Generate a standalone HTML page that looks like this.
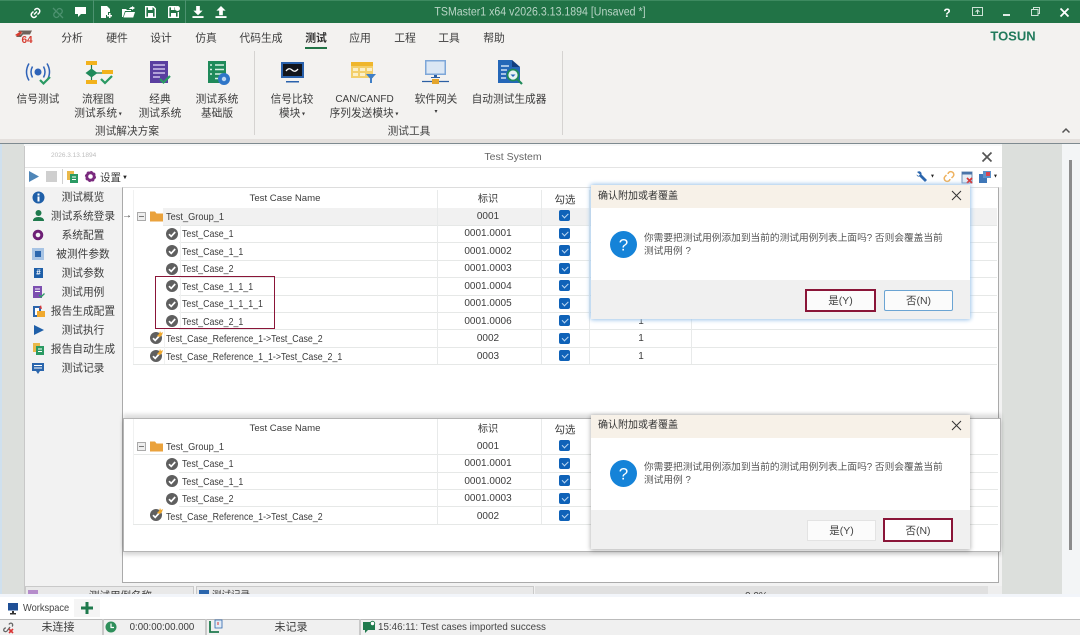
<!DOCTYPE html>
<html><head><meta charset="utf-8"><style>
html,body{margin:0;padding:0;background:#fff}
body{width:1080px;height:635px;position:relative;overflow:hidden;font-family:"Liberation Sans","Noto Sans CJK SC",sans-serif;font-size:10px;color:#3c3c3c}
.a{position:absolute}
.c{position:absolute;transform:translate(-50%,-50%);white-space:nowrap;line-height:1}
.l{position:absolute;transform:translateY(-50%);white-space:nowrap;line-height:1}
.n{font-size:10.500px;transform:translateY(-50%) scaleX(.84);transform-origin:left center}
svg{position:absolute;overflow:visible}
.cb{position:absolute;width:11px;height:11px;border-radius:2px;background:#0f62b8}
.cb:after{content:"";position:absolute;left:3px;top:2.500px;width:5px;height:2.500px;border-left:1px solid #b9d6f2;border-bottom:1px solid #b9d6f2;transform:rotate(-45deg)}
.hl{position:absolute;height:1px;background:#e6e8e7}
.vl{position:absolute;width:1px;background:#e8eaea}
.dlg{position:absolute;background:#fff}
.btn{position:absolute;background:#fbfbfb;text-align:center;box-sizing:border-box;font-size:10.500px;color:#444}
.t{font-size:10.700px}
.s{font-size:10.800px}
</style></head><body>
<svg width="0" height="0" style="position:absolute"><defs>
<g id="ck"><circle cx="6" cy="6" r="6" fill="#5f5f5f"/><path d="M3 6.200l2.200 2.200L9.200 4" fill="none" stroke="#fff" stroke-width="1.700"/></g>
<g id="rf"><circle cx="6" cy="7" r="6" fill="#5f5f5f"/><path d="M3 7.200l2.200 2.200L9.200 5" fill="none" stroke="#fff" stroke-width="1.700"/><path d="M7 5L9 3l1-3 1 2 2-1-1 3-2 2z" fill="#f0a92e"/></g>
<g id="fo"><path d="M0 1.500h5l1.500 2H13v8H0z" fill="#eaa23c"/></g>
</defs></svg>

<!-- title bar -->
<div class="a" style="left:0;top:0;width:1080px;height:23px;background:#217346"></div>
<div class="a" style="left:0;top:0;width:1080px;height:1px;background:#3d8a60"></div>
<div class="a" style="left:93px;top:0;width:1px;height:23px;background:#4d9270"></div>
<div class="a" style="left:185px;top:0;width:1px;height:23px;background:#4d9270"></div>
<svg style="left:29px;top:7px" width="13" height="12" viewBox="0 0 12 12" fill="none" stroke="#fff" stroke-width="1.500"><path d="M5 3.500a2.600 2.600 0 0 1 4-1.500 2.600 2.600 0 0 1 .6 4L8 7.500M7 8.500A2.600 2.600 0 0 1 3 10 2.600 2.600 0 0 1 2.400 6L4 4.500M4.500 7.500L7.500 4.500"/></svg>
<svg style="left:52px;top:7px" width="12" height="12" viewBox="0 0 12 12" fill="none" stroke="#4d9270" stroke-width="1.300"><path d="M5 3.500a2.600 2.600 0 0 1 4-1.500 2.600 2.600 0 0 1 .6 4L8 7.500M7 8.500A2.600 2.600 0 0 1 3 10 2.600 2.600 0 0 1 2.400 6L4 4.500M1 1l10 10"/></svg>
<svg style="left:75px;top:7px" width="11" height="10" viewBox="0 0 11 10"><path d="M0 0h11v7H6L3 10V7H0z" fill="#fff"/></svg>
<svg style="left:101px;top:6px" width="11" height="12" viewBox="0 0 11 12"><path d="M0 0h6l3 3v3H7v3H5v3H0z" fill="#fff"/><path d="M6 9h2V7h1.500v2H11v1.500H9.500V12H8v-1.500H6z" fill="#fff"/></svg>
<svg style="left:122px;top:6px" width="13" height="12" viewBox="0 0 13 12"><path d="M0 3h4l1 1h4v1H3L1 11H0z" fill="#fff"/><path d="M3.500 6H13l-1.800 5.500H1.500z" fill="#fff"/><path d="M7 3q1-2 3-2V0l3 2-3 2V3q-2 0-3 0z" fill="#fff"/></svg>
<svg style="left:145px;top:6px" width="11" height="12" viewBox="0 0 11 12"><path d="M0.700 0.700h7.600l2 2v8.600H0.700z" fill="none" stroke="#fff" stroke-width="1.400"/><path d="M3 1h4.500v3H3zM3 7h5v4H3z" fill="#fff"/></svg>
<svg style="left:168px;top:6px" width="12" height="12" viewBox="0 0 12 12"><path d="M0.700 0.700h7v3M.7.7v10.600h9.600V6" fill="none" stroke="#fff" stroke-width="1.400"/><path d="M3 1h3.500v3H3zM3 7h5v4H3z" fill="#fff"/><circle cx="9.500" cy="2.500" r="2.500" fill="#fff"/></svg>
<svg style="left:192px;top:6px" width="12" height="12" viewBox="0 0 12 13"><path d="M4 0h4v5h3L6 10 1 5h3zM0 11h12v2H0z" fill="#fff"/></svg>
<svg style="left:215px;top:6px" width="12" height="12" viewBox="0 0 12 13"><path d="M6 0l5 5H8v5H4V5H1zM0 11h12v2H0z" fill="#fff"/></svg>
<div class="c" style="left:540px;top:13px;font-size:11.500px;color:#b9d5c6;transform:translate(-50%,-50%) scaleX(.92)">TSMaster1 x64 v2026.3.13.1894 [Unsaved *]</div>
<div class="c" style="left:947px;top:12.500px;font-size:12px;font-weight:bold;color:#fff">?</div>
<svg style="left:972px;top:7px" width="11" height="10" viewBox="0 0 11 10" fill="none" stroke="#cfe2d7"><path d="M.5.500h10v8H.5zM5.500 7V3M3.500 5l2-2 2 2"/></svg>
<div class="a" style="left:1003px;top:14px;width:7px;height:2px;background:#dfeae4"></div>
<svg style="left:1031px;top:7px" width="9" height="9" viewBox="0 0 9 9" fill="none" stroke="#cfe2d7"><path d="M.5 2.500h6.500v6H.5zM2.500 2.500V.5h6v6H7"/></svg>
<svg style="left:1060px;top:7.500px" width="9" height="9" viewBox="0 0 9 9" fill="none" stroke="#fff" stroke-width="1.800"><path d="M.5.500l8 8M8.500.5l-8 8"/></svg>

<!-- ribbon -->
<div class="a" style="left:0;top:23px;width:1080px;height:117px;background:#f3f2f0"></div>
<div class="a" style="left:0;top:139px;width:1080px;height:4px;background:#e4e0dd"></div>
<svg style="left:14px;top:29px" width="20" height="17" viewBox="0 0 20 17"><path d="M5 1.500h13l-2 4H9L7 8H2l2-2.500h3L8.500 3H4z" fill="#6f625a"/><path d="M1 6l6-4 1 2-4 3.500z" fill="#d63b2f"/></svg>
<div class="a" style="left:21.500px;top:35.500px;font-size:10px;font-weight:bold;color:#d63b2f;line-height:10px">64</div>
<div class="c s" style="left:72px;top:39px">分析</div>
<div class="c s" style="left:117px;top:39px">硬件</div>
<div class="c s" style="left:161px;top:39px">设计</div>
<div class="c s" style="left:206px;top:39px">仿真</div>
<div class="c s" style="left:261px;top:39px">代码生成</div>
<div class="c s" style="left:316px;top:39px;font-weight:bold;color:#333">测试</div>
<div class="a" style="left:305px;top:47px;width:22px;height:2px;background:#217346"></div>
<div class="c s" style="left:360px;top:39px">应用</div>
<div class="c s" style="left:405px;top:39px">工程</div>
<div class="c s" style="left:449px;top:39px">工具</div>
<div class="c s" style="left:494px;top:39px">帮助</div>
<div class="c" style="left:1013px;top:36px;font-size:13px;font-weight:bold;color:#217a5c">TOSUN</div>
<div class="a" style="left:254px;top:51px;width:1px;height:84px;background:#d5d3d1"></div>
<div class="a" style="left:562px;top:51px;width:1px;height:84px;background:#d5d3d1"></div>

<!-- ribbon icons -->
<svg style="left:25px;top:62px" width="26" height="24" viewBox="0 0 26 24" fill="none"><circle cx="13" cy="10" r="3.500" fill="#2e63b8"/><path d="M7.500 4.500q-3 5.500 0 11M18.500 4.500q3 5.500 0 11" stroke="#2e63b8" stroke-width="1.500"/><path d="M4 1.500q-5 8.500 0 17M22 1.500q5 8.500 0 17" stroke="#2e63b8" stroke-width="1.500"/><path d="M15 18l3.500 3.500L25 15" stroke="#2a9a63" stroke-width="2.200"/></svg>
<svg style="left:85px;top:60px" width="28" height="26" viewBox="0 0 28 26"><path d="M6.500 4v18M6.500 13H20" stroke="#1f7a4d" stroke-width="1.200"/><path d="M1 1h11v4H1zM1 20h11v4H1zM17 10h11v4H17z" fill="#f2b21c"/><path d="M6.500 8.500l6 4.500-6 4.500-6-4.500z" fill="#1f8a5a"/><path d="M16 19l4 4 7-7" fill="none" stroke="#2a9a63" stroke-width="2.200"/></svg>
<svg style="left:150px;top:60px" width="20" height="26" viewBox="0 0 20 26"><path d="M0 1h18v22H0z" fill="#5a3fa0"/><path d="M3 5h12M3 9h12M3 13h12M3 17h7" stroke="#cfc4ea" stroke-width="1.500"/><path d="M10 19l3.500 3.500L20 16" fill="none" stroke="#2a9a63" stroke-width="2.200"/></svg>
<svg style="left:207px;top:60px" width="24" height="26" viewBox="0 0 24 26"><path d="M1 1h18v22H1z" fill="#1f8a5a"/><path d="M8 5h9M8 9.500h9M8 14h9M8 18.500h4M3 5h2M3 9.500h2M3 14h2" stroke="#d5efe2" stroke-width="1.500"/><circle cx="17" cy="19" r="6" fill="#2f76c8"/><circle cx="17" cy="19" r="2.200" fill="#bcd7f2"/></svg>
<svg style="left:281px;top:61px" width="23" height="22" viewBox="0 0 23 22"><path d="M0 1h23v16H0z" fill="#2a62ad"/><path d="M2 3h19v12H2z" fill="#12151c"/><path d="M5 10q3-4 6-1t6-1" fill="none" stroke="#fff" stroke-width="1.300"/><path d="M5 20h13v1.500H5z" fill="#2a62ad"/></svg>
<svg style="left:350px;top:61px" width="26" height="22" viewBox="0 0 26 22"><path d="M1 1h22v16H1z" fill="#f3cf6b"/><path d="M1 1h22v4H1z" fill="#efb62c"/><path d="M3 7h5v3H3zM10 7h5v3h-5zM17 7h5v3h-5zM3 12h5v3H3zM10 12h5v3h-5z" fill="#fbefc8"/><path d="M16 13h10l-4 4.500V22h-2v-4.500z" fill="#3f7fc6"/></svg>
<svg style="left:422px;top:59px" width="27" height="27" viewBox="0 0 27 27"><path d="M3 1h21v15H3z" fill="#7ea7d8"/><path d="M4.500 2.500h18v12h-18z" fill="#dbe7f4"/><path d="M12 16h3v3h-3zM9 18h9v1H9z" fill="#2c5fa3"/><path d="M0 22.500h27" stroke="#2c5fa3" stroke-width="1.200"/><path d="M10 20h7v5h-7z" fill="#e4a52c"/></svg>
<svg style="left:498px;top:60px" width="25" height="26" viewBox="0 0 25 26"><path d="M0 0h14l8 7v16H0z" fill="#2467b8"/><path d="M14 0l8 7h-8z" fill="#123f7f"/><path d="M3 6h8M3 10h6M3 14h5M3 18h5" stroke="#cfe0f4" stroke-width="1.400"/><circle cx="15" cy="15" r="5.500" fill="#e8f3f2" stroke="#1f8a5a" stroke-width="1.800"/><path d="M12.500 14.500h5l-2.500 2.500z" fill="#2467b8"/><path d="M19 19l5 5" stroke="#1f8a5a" stroke-width="2.200"/></svg>

<div class="c t" style="left:38px;top:100px">信号测试</div>
<div class="c t" style="left:98px;top:100px">流程图</div>
<div class="c t" style="left:98px;top:114px">测试系统<span style="font-size:6px;vertical-align:1px"> ▾</span></div>
<div class="c t" style="left:160px;top:100px">经典</div>
<div class="c t" style="left:160px;top:114px">测试系统</div>
<div class="c t" style="left:217px;top:100px">测试系统</div>
<div class="c t" style="left:217px;top:114px">基础版</div>
<div class="c t" style="left:292px;top:100px">信号比较</div>
<div class="c t" style="left:292px;top:114px">模块<span style="font-size:6px;vertical-align:1px"> ▾</span></div>
<div class="c" style="left:364.500px;top:99.500px;font-size:10px">CAN/CANFD</div>
<div class="c t" style="left:364px;top:114px">序列发送模块<span style="font-size:6px;vertical-align:1px"> ▾</span></div>
<div class="c t" style="left:436px;top:100px">软件网关</div>
<div class="c" style="left:436px;top:112px;font-size:6px">▾</div>
<div class="c t" style="left:509px;top:100px">自动测试生成器</div>
<div class="c t" style="left:127px;top:132px">测试解决方案</div>
<div class="c t" style="left:409px;top:132px">测试工具</div>
<svg style="left:1062px;top:128px" width="8" height="5" viewBox="0 0 8 5" fill="none" stroke="#555" stroke-width="1.500"><path d="M.5 4.500L4 1l3.500 3.500"/></svg>

<!-- main background -->
<div class="a" style="left:0;top:143px;width:1080px;height:452px;background:#f6f7f7"></div>
<div class="a" style="left:0;top:143px;width:1080px;height:1px;background:#7e8a90"></div>
<div class="a" style="left:0;top:144px;width:2px;height:451px;background:#cfe0ee"></div>
<div class="a" style="left:2px;top:144px;width:22px;height:451px;background:#dcdfdc"></div>
<div class="a" style="left:1002px;top:144px;width:60px;height:451px;background:#dcdfdc"></div>
<div class="a" style="left:1062px;top:144px;width:18px;height:451px;background:#f3f5f6"></div>
<div class="a" style="left:1069px;top:160px;width:3px;height:390px;background:#8c8c8c"></div>

<!-- window -->
<div class="a" style="left:24px;top:146px;width:978px;height:449px;background:#f2f2f2;border-left:1px solid #c8c8c8;box-sizing:border-box"></div>
<div class="a" style="left:25px;top:146px;width:977px;height:21px;background:#fff;border-bottom:1px solid #e4e4e4"></div>
<div class="l" style="left:51px;top:156px;font-size:6.500px;color:#bdbdbd">2026.3.13.1894</div>
<div class="c" style="left:513px;top:157px;font-size:10.500px;color:#666">Test System</div>
<svg style="left:982px;top:152px" width="10" height="10" viewBox="0 0 10 10" fill="none" stroke="#555" stroke-width="1.700"><path d="M.5.500l9 9M9.500.5l-9 9"/></svg>
<div class="a" style="left:25px;top:168px;width:977px;height:19px;background:#fff"></div>
<svg style="left:29px;top:171px" width="10" height="11" viewBox="0 0 10 11"><path d="M0 0l10 5.500L0 11z" fill="#4f86b8"/></svg>
<div class="a" style="left:46px;top:171px;width:11px;height:11px;background:#cfcfcf"></div>
<div class="a" style="left:62px;top:169px;width:1px;height:15px;background:#d0d0d0"></div>
<svg style="left:67px;top:171px" width="11" height="12" viewBox="0 0 11 12"><path d="M0 0h7v9H0z" fill="#eab94a"/><path d="M3 3h8v9H3z" fill="#2a9a63"/><path d="M5 6h4M5 8.500h4" stroke="#fff"/></svg>
<svg style="left:85px;top:171px" width="11" height="11" viewBox="0 0 11 11"><circle cx="5.500" cy="5.500" r="3.700" fill="none" stroke="#7a2a7e" stroke-width="2.800"/><circle cx="5.500" cy="5.500" r="5" fill="none" stroke="#7a2a7e" stroke-width="1.200" stroke-dasharray="2 1.900"/></svg>
<div class="l" style="left:100px;top:178px;font-size:10.500px">设置</div>
<div class="l" style="left:122px;top:177.500px;font-size:6px;color:#222">▼</div>
<svg style="left:916px;top:171px" width="11" height="11" viewBox="0 0 11 11"><path d="M1 1q3-2 4.500 1 0 1 0 1.500L11 9l-2 2-5.500-5.500Q1 6 .5 3.500L2.500 5 4 3.500z" fill="#2b66ad"/></svg>
<div class="l" style="left:930px;top:177px;font-size:5px;color:#222">▼</div>
<svg style="left:943px;top:170px" width="12" height="13" viewBox="0 0 12 13" fill="none" stroke="#eeb25f" stroke-width="1.500"><path d="M5 4a2.800 2.800 0 0 1 4.500-1.800 2.800 2.800 0 0 1 .6 4.300L8.500 8M7 9a2.800 2.800 0 0 1-4.500 1.800A2.800 2.800 0 0 1 2 6.500L3.500 5"/></svg>
<svg style="left:961px;top:171px" width="13" height="13" viewBox="0 0 13 13"><path d="M1 1h10v11H1z" fill="#e6ecf4" stroke="#6f8fb6"/><path d="M1 1h10v2.500H1z" fill="#4a74a8"/><path d="M6 7l5 5M11 7l-5 5" stroke="#d93636" stroke-width="1.700"/></svg>
<svg style="left:979px;top:171px" width="12" height="12" viewBox="0 0 12 12"><path d="M0 3h8v9H0z" fill="#3f77b8"/><path d="M4 0h8v7H4z" fill="#5d92cb"/><path d="M7 1h4v4H7z" fill="#d9434f"/></svg>
<div class="l" style="left:993px;top:177px;font-size:5px;color:#222">▼</div>

<!-- sidebar -->
<div class="a" style="left:25px;top:187px;width:97px;height:408px;background:#f2f2f2"></div>
<div class="c t" style="left:83px;top:198px">测试概览</div>
<div class="c t" style="left:83px;top:217px">测试系统登录</div>
<div class="c t" style="left:83px;top:236px">系统配置</div>
<div class="c t" style="left:83px;top:255px">被测件参数</div>
<div class="c t" style="left:83px;top:274px">测试参数</div>
<div class="c t" style="left:83px;top:293px">测试用例</div>
<div class="c t" style="left:83px;top:312px">报告生成配置</div>
<div class="c t" style="left:83px;top:331px">测试执行</div>
<div class="c t" style="left:83px;top:350px">报告自动生成</div>
<div class="c t" style="left:83px;top:369px">测试记录</div>
<svg style="left:32px;top:191px" width="13" height="13" viewBox="0 0 13 13"><circle cx="6.500" cy="6.500" r="6" fill="#1f5fa8"/><path d="M5.500 2.500h2v2h-2zM5.500 5.500h2v5h-2z" fill="#fff"/></svg>
<svg style="left:33px;top:210px" width="11" height="12" viewBox="0 0 11 12"><circle cx="5.500" cy="3" r="3" fill="#1f7a4d"/><path d="M0 11q0-4 5.500-4T11 11z" fill="#1f7a4d"/></svg>
<svg style="left:32px;top:229px" width="12" height="12" viewBox="0 0 12 12"><circle cx="6" cy="6" r="3.800" fill="none" stroke="#6d1f75" stroke-width="3"/></svg>
<div class="a" style="left:32px;top:248px;width:12px;height:12px;background:#a8c4e4"></div><div class="a" style="left:35px;top:251px;width:6px;height:6px;background:#2b66ad"></div>
<div class="a" style="left:34px;top:268px;width:9px;height:10px;background:#1f5fa8;color:#fff;font-size:8px;line-height:10px;text-align:center;font-weight:bold">#</div>
<svg style="left:33px;top:286px" width="12" height="12" viewBox="0 0 12 12"><path d="M0 0h9v12H0z" fill="#7d4fb0"/><path d="M2 3h5M2 5.500h5" stroke="#fff"/><path d="M6 9l2 2 3.500-3.500" fill="none" stroke="#2a9a63" stroke-width="1.300"/></svg>
<svg style="left:33px;top:305px" width="12" height="12" viewBox="0 0 12 12"><path d="M0 1h8v11H0z" fill="#2b66ad"/><path d="M2 3h4v7H2z" fill="#fff"/><path d="M4 6h8v6H4z" fill="#f0a92e"/><path d="M6 3l2-3 1 4z" fill="#d93636"/></svg>
<svg style="left:34px;top:325px" width="10" height="10" viewBox="0 0 10 10"><path d="M0 0l10 5-10 5z" fill="#1f5fa8"/></svg>
<svg style="left:33px;top:343px" width="12" height="12" viewBox="0 0 12 12"><path d="M0 0h7v9H0z" fill="#eab94a"/><path d="M3 3h8v9H3z" fill="#2a9a63"/><path d="M5 6h4M5 8.500h4" stroke="#fff"/></svg>
<svg style="left:32px;top:363px" width="12" height="11" viewBox="0 0 12 11"><path d="M0 0h12v8H8l-2 3-2-3H0z" fill="#2b66ad"/><path d="M2 2.500h8M2 5h8" stroke="#fff"/></svg>

<!-- content -->
<div class="a" style="left:122px;top:187px;width:877px;height:396px;background:#fff;border:1px solid #aaa;border-top-color:#ddd;box-sizing:border-box"></div>

<!-- table 1 -->
<div class="a" style="left:163px;top:208px;width:834px;height:17px;background:#f1f1f1"></div>
<div class="hl" style="left:179px;top:242px;width:818px"></div>
<div class="hl" style="left:179px;top:260px;width:818px"></div>
<div class="hl" style="left:179px;top:277px;width:818px"></div>
<div class="hl" style="left:179px;top:295px;width:818px"></div>
<div class="hl" style="left:179px;top:312px;width:818px"></div>
<div class="hl" style="left:179px;top:329px;width:818px"></div>
<div class="hl" style="left:133px;top:347px;width:864px"></div>
<div class="hl" style="left:133px;top:364px;width:864px"></div>
<div class="hl" style="left:163px;top:225px;width:834px"></div>
<div class="vl" style="left:437px;top:190px;height:174px"></div>
<div class="vl" style="left:541px;top:190px;height:174px"></div>
<div class="vl" style="left:589px;top:190px;height:174px"></div>
<div class="vl" style="left:691px;top:190px;height:174px"></div>
<div class="vl" style="left:133px;top:190px;height:174px;background:#f0f1f1"></div>
<div class="vl" style="left:180px;top:225px;height:104px;background:#f0f1f1"></div>
<div class="vl" style="left:164px;top:329px;height:35px;background:#f0f1f1"></div>
<div class="c" style="left:285px;top:199px;font-size:9.600px">Test Case Name</div>
<div class="c" style="left:488px;top:199.500px;font-size:10.200px">标识</div>
<div class="c" style="left:565px;top:199.500px;font-size:10.500px">勾选</div>
<div class="c" style="left:127px;top:216px;font-size:10px">→</div>
<div class="a" style="left:137px;top:212px;width:7px;height:7px;border:1px solid #aaa;background:#eee"></div><div class="a" style="left:139px;top:216px;width:5px;height:1px;background:#777"></div>
<svg style="left:150px;top:210px;width:13px;height:12px"><use href="#fo"/></svg>
<div class="l n" style="left:166px;top:216.500px;transform:translateY(-50%) scaleX(.88)">Test_Group_1</div>
<svg style="left:166px;top:228px;width:12px;height:12px"><use href="#ck"/></svg><div class="l n" style="left:182px;top:234px">Test_Case_1</div>
<svg style="left:166px;top:245px;width:12px;height:12px"><use href="#ck"/></svg><div class="l n" style="left:182px;top:251.500px">Test_Case_1_1</div>
<svg style="left:166px;top:263px;width:12px;height:12px"><use href="#ck"/></svg><div class="l n" style="left:182px;top:269px">Test_Case_2</div>
<svg style="left:166px;top:280px;width:12px;height:12px"><use href="#ck"/></svg><div class="l n" style="left:182px;top:286.500px">Test_Case_1_1_1</div>
<svg style="left:166px;top:298px;width:12px;height:12px"><use href="#ck"/></svg><div class="l n" style="left:182px;top:304px">Test_Case_1_1_1_1</div>
<svg style="left:166px;top:315px;width:12px;height:12px"><use href="#ck"/></svg><div class="l n" style="left:182px;top:321.500px">Test_Case_2_1</div>
<svg style="left:150px;top:331px;width:14px;height:14px"><use href="#rf"/></svg><div class="l n" style="left:166px;top:339px">Test_Case_Reference_1-&gt;Test_Case_2</div>
<svg style="left:150px;top:349px;width:14px;height:14px"><use href="#rf"/></svg><div class="l n" style="left:166px;top:356.500px">Test_Case_Reference_1_1-&gt;Test_Case_2_1</div>
<div class="c" style="left:488px;top:216.500px">0001</div>
<div class="c" style="left:488px;top:234px">0001.0001</div>
<div class="c" style="left:488px;top:251.500px">0001.0002</div>
<div class="c" style="left:488px;top:269px">0001.0003</div>
<div class="c" style="left:488px;top:286.500px">0001.0004</div>
<div class="c" style="left:488px;top:304px">0001.0005</div>
<div class="c" style="left:488px;top:321.500px">0001.0006</div>
<div class="c" style="left:488px;top:339px">0002</div>
<div class="c" style="left:488px;top:356.500px">0003</div>
<div class="cb" style="left:559px;top:210px"></div>
<div class="cb" style="left:559px;top:228px"></div>
<div class="cb" style="left:559px;top:245px"></div>
<div class="cb" style="left:559px;top:263px"></div>
<div class="cb" style="left:559px;top:280px"></div>
<div class="cb" style="left:559px;top:298px"></div>
<div class="cb" style="left:559px;top:315px"></div>
<div class="cb" style="left:559px;top:333px"></div>
<div class="cb" style="left:559px;top:350px"></div>
<div class="c" style="left:641px;top:321.500px">1</div>
<div class="c" style="left:641px;top:339px">1</div>
<div class="c" style="left:641px;top:356.500px">1</div>
<div class="a" style="left:155px;top:276px;width:120px;height:53px;border:1.500px solid #8a1538;box-sizing:border-box"></div>

<!-- overlay panel -->
<div class="a" style="left:123px;top:418px;width:878px;height:134px;background:#fff;border:1px solid #b5b5b5;box-sizing:border-box;box-shadow:0 -4px 4px rgba(0,0,0,.13),0 3px 4px rgba(0,0,0,.16)"></div>
<div class="hl" style="left:133px;top:454px;width:865px"></div>
<div class="hl" style="left:179px;top:472px;width:819px"></div>
<div class="hl" style="left:179px;top:489px;width:819px"></div>
<div class="hl" style="left:179px;top:506px;width:819px"></div>
<div class="hl" style="left:133px;top:524px;width:865px"></div>
<div class="vl" style="left:437px;top:419px;height:105px"></div>
<div class="vl" style="left:541px;top:419px;height:105px"></div>
<div class="vl" style="left:133px;top:419px;height:105px;background:#f0f1f1"></div>
<div class="c" style="left:285px;top:429px;font-size:9.600px">Test Case Name</div>
<div class="c" style="left:488px;top:429.500px;font-size:10.200px">标识</div>
<div class="c" style="left:565px;top:429.500px;font-size:10.500px">勾选</div>
<div class="a" style="left:137px;top:442px;width:7px;height:7px;border:1px solid #aaa;background:#eee"></div><div class="a" style="left:139px;top:446px;width:5px;height:1px;background:#777"></div>
<svg style="left:150px;top:440px;width:13px;height:12px"><use href="#fo"/></svg>
<div class="l n" style="left:166px;top:446.500px;transform:translateY(-50%) scaleX(.88)">Test_Group_1</div>
<svg style="left:166px;top:458px;width:12px;height:12px"><use href="#ck"/></svg><div class="l n" style="left:182px;top:464px">Test_Case_1</div>
<svg style="left:166px;top:475px;width:12px;height:12px"><use href="#ck"/></svg><div class="l n" style="left:182px;top:481.500px">Test_Case_1_1</div>
<svg style="left:166px;top:493px;width:12px;height:12px"><use href="#ck"/></svg><div class="l n" style="left:182px;top:499px">Test_Case_2</div>
<svg style="left:150px;top:508px;width:14px;height:14px"><use href="#rf"/></svg><div class="l n" style="left:166px;top:516.500px">Test_Case_Reference_1-&gt;Test_Case_2</div>
<div class="c" style="left:488px;top:446.500px">0001</div>
<div class="c" style="left:488px;top:464px">0001.0001</div>
<div class="c" style="left:488px;top:481.500px">0001.0002</div>
<div class="c" style="left:488px;top:499px">0001.0003</div>
<div class="c" style="left:488px;top:516.500px">0002</div>
<div class="cb" style="left:559px;top:440px"></div>
<div class="cb" style="left:559px;top:458px"></div>
<div class="cb" style="left:559px;top:475px"></div>
<div class="cb" style="left:559px;top:493px"></div>
<div class="cb" style="left:559px;top:510px"></div>

<!-- dialog 1 -->
<div class="dlg" style="left:591px;top:185px;width:379px;height:134px;box-shadow:0 0 4px 1px #9cc4ea;border-radius:2px"></div>
<div class="a" style="left:591px;top:185px;width:379px;height:23px;background:#f7f1e8"></div>
<div class="a" style="left:591px;top:280px;width:379px;height:39px;background:#f0f0f0"></div>
<div class="l" style="left:598px;top:197px;font-size:10px;color:#333">确认附加或者覆盖</div>
<svg style="left:952px;top:191px" width="9" height="9" viewBox="0 0 9 9" fill="none" stroke="#333"><path d="M0 0l9 9M9 0L0 9"/></svg>
<svg style="left:610px;top:231px" width="27" height="27" viewBox="0 0 27 27"><circle cx="13.500" cy="13.500" r="13.500" fill="#1583d8"/></svg>
<div class="c" style="left:623.500px;top:244.500px;font-size:17px;color:#fff">?</div>
<div class="l" style="left:644px;top:239px;font-size:9.700px;color:#555">你需要把测试用例添加到当前的测试用例列表上面吗? 否则会覆盖当前</div>
<div class="l" style="left:644px;top:252px;font-size:9.700px;color:#555">测试用例 ?</div>
<div class="btn" style="left:805px;top:289px;width:71px;height:23px;border:2px solid #8a1538;line-height:21px">是(Y)</div>
<div class="btn" style="left:884px;top:290px;width:69px;height:21px;border:1px solid #6ba4d3;border-radius:2px;line-height:21px">否(N)</div>

<!-- dialog 2 -->
<div class="dlg" style="left:591px;top:415px;width:379px;height:134px;box-shadow:0 1px 4px 1px rgba(0,0,0,.25);border-radius:2px"></div>
<div class="a" style="left:591px;top:415px;width:379px;height:23px;background:#f7f1e8"></div>
<div class="a" style="left:591px;top:510px;width:379px;height:39px;background:#f0f0f0"></div>
<div class="l" style="left:598px;top:426px;font-size:10px;color:#333">确认附加或者覆盖</div>
<svg style="left:952px;top:421px" width="9" height="9" viewBox="0 0 9 9" fill="none" stroke="#333"><path d="M0 0l9 9M9 0L0 9"/></svg>
<svg style="left:610px;top:460px" width="27" height="27" viewBox="0 0 27 27"><circle cx="13.500" cy="13.500" r="13.500" fill="#1583d8"/></svg>
<div class="c" style="left:623.500px;top:473.500px;font-size:17px;color:#fff">?</div>
<div class="l" style="left:644px;top:468px;font-size:9.700px;color:#555">你需要把测试用例添加到当前的测试用例列表上面吗? 否则会覆盖当前</div>
<div class="l" style="left:644px;top:481px;font-size:9.700px;color:#555">测试用例 ?</div>
<div class="btn" style="left:807px;top:520px;width:69px;height:21px;border:1px solid #e3e3e3;line-height:21px">是(Y)</div>
<div class="btn" style="left:883px;top:518px;width:70px;height:24px;border:2px solid #8a1538;line-height:22px;background:#fff">否(N)</div>

<!-- bottom tabs -->
<div class="a" style="left:25px;top:586px;width:169px;height:9px;background:#e9e9e9;border:1px solid #c9c9c9;border-bottom:0;overflow:hidden;box-sizing:border-box">
 <div style="position:absolute;left:2px;top:3px;width:10px;height:9px;background:#b58ccb"></div>
 <div style="position:absolute;left:63px;top:3px;font-size:10.500px;line-height:12px;white-space:nowrap">测试用例名称</div></div>
<div class="a" style="left:196px;top:586px;width:338px;height:9px;background:#e9e9e9;border:1px solid #c9c9c9;border-bottom:0;overflow:hidden;box-sizing:border-box">
 <div style="position:absolute;left:2px;top:3px;width:10px;height:9px;background:#2b66ad"></div>
 <div style="position:absolute;left:15px;top:3px;font-size:9.500px;line-height:12px;white-space:nowrap">测试记录</div></div>
<div class="a" style="left:535px;top:586px;width:453px;height:9px;background:#e0e0e0;overflow:hidden">
 <div style="position:absolute;left:210px;top:5px;font-size:10px;line-height:12px;white-space:nowrap">0.0%</div></div>
<div class="a" style="left:988px;top:586px;width:14px;height:9px;background:#eee"></div>

<!-- footer -->
<div class="a" style="left:0;top:594px;width:1080px;height:25px;background:#fff"></div>
<div class="a" style="left:0;top:594px;width:1080px;height:3px;background:#f2f5fa"></div>
<div class="a" style="left:74px;top:599px;width:26px;height:18px;background:#f5f5f5"></div>
<svg style="left:8px;top:603px" width="10" height="12" viewBox="0 0 10 12"><path d="M0 0h10v7.500H0z" fill="#1f4f96"/><path d="M4 8h2v2h2v1.500H2V10h2z" fill="#333"/></svg>
<div class="l" style="left:23px;top:609px;font-size:10.300px;color:#444;transform:translateY(-50%) scaleX(.9);transform-origin:left center">Workspace</div>
<svg style="left:81px;top:602px" width="12" height="12" viewBox="0 0 12 12"><path d="M4.500 0h3v4.500H12v3H7.500V12h-3V7.500H0v-3h4.500z" fill="#1f7a4d"/></svg>

<!-- status bar -->
<div class="a" style="left:0;top:619px;width:1080px;height:16px;background:#f0f0f0;border-top:1px solid #bbb;box-sizing:border-box"></div>
<div class="a" style="left:102px;top:619px;width:2px;height:16px;background:#c9c9c9"></div>
<div class="a" style="left:205px;top:619px;width:2px;height:16px;background:#c9c9c9"></div>
<div class="a" style="left:359px;top:619px;width:2px;height:16px;background:#c9c9c9"></div>
<svg style="left:2px;top:621px" width="12" height="13" viewBox="0 0 12 13" fill="none"><path d="M7 3.500a2 2 0 0 1 3-1 2 2 0 0 1 0 3M4 7a2 2 0 0 0-2 3 2 2 0 0 0 3 0l3-4" stroke="#666" stroke-width="1.300"/><path d="M7 8l4 4M11 8l-4 4" stroke="#d93636" stroke-width="1.600"/></svg>
<div class="c" style="left:58px;top:628px;font-size:11px">未连接</div>
<svg style="left:105px;top:621px" width="12" height="12" viewBox="0 0 12 12"><circle cx="6" cy="6" r="5.500" fill="#2f8f5b"/><path d="M6 2.500V6.500H9" fill="none" stroke="#fff" stroke-width="1.200"/></svg>
<div class="c" style="left:162px;top:627.500px;font-size:9.700px">0:00:00:00.000</div>
<svg style="left:209px;top:620px" width="14" height="14" viewBox="0 0 14 14"><path d="M1 1v11h9" fill="none" stroke="#1f7a4d" stroke-width="1.800"/><path d="M6 0h7v8H6z" fill="#e4ecf6" stroke="#2b66ad" stroke-width=".8"/><path d="M9 2v3" stroke="#d93636"/></svg>
<div class="c" style="left:291px;top:628px;font-size:11px">未记录</div>
<svg style="left:363px;top:621px" width="12" height="12" viewBox="0 0 12 12"><path d="M0 1h7.500v2.500H12V9H5l-3 3V9H0z" fill="#1f7a4d"/><circle cx="9.500" cy="2.500" r="2.200" fill="#fff" stroke="#1f7a4d"/></svg>
<div class="l" style="left:378px;top:627.500px;font-size:9.800px;color:#444">15:46:11: Test cases imported success</div>
</body></html>
